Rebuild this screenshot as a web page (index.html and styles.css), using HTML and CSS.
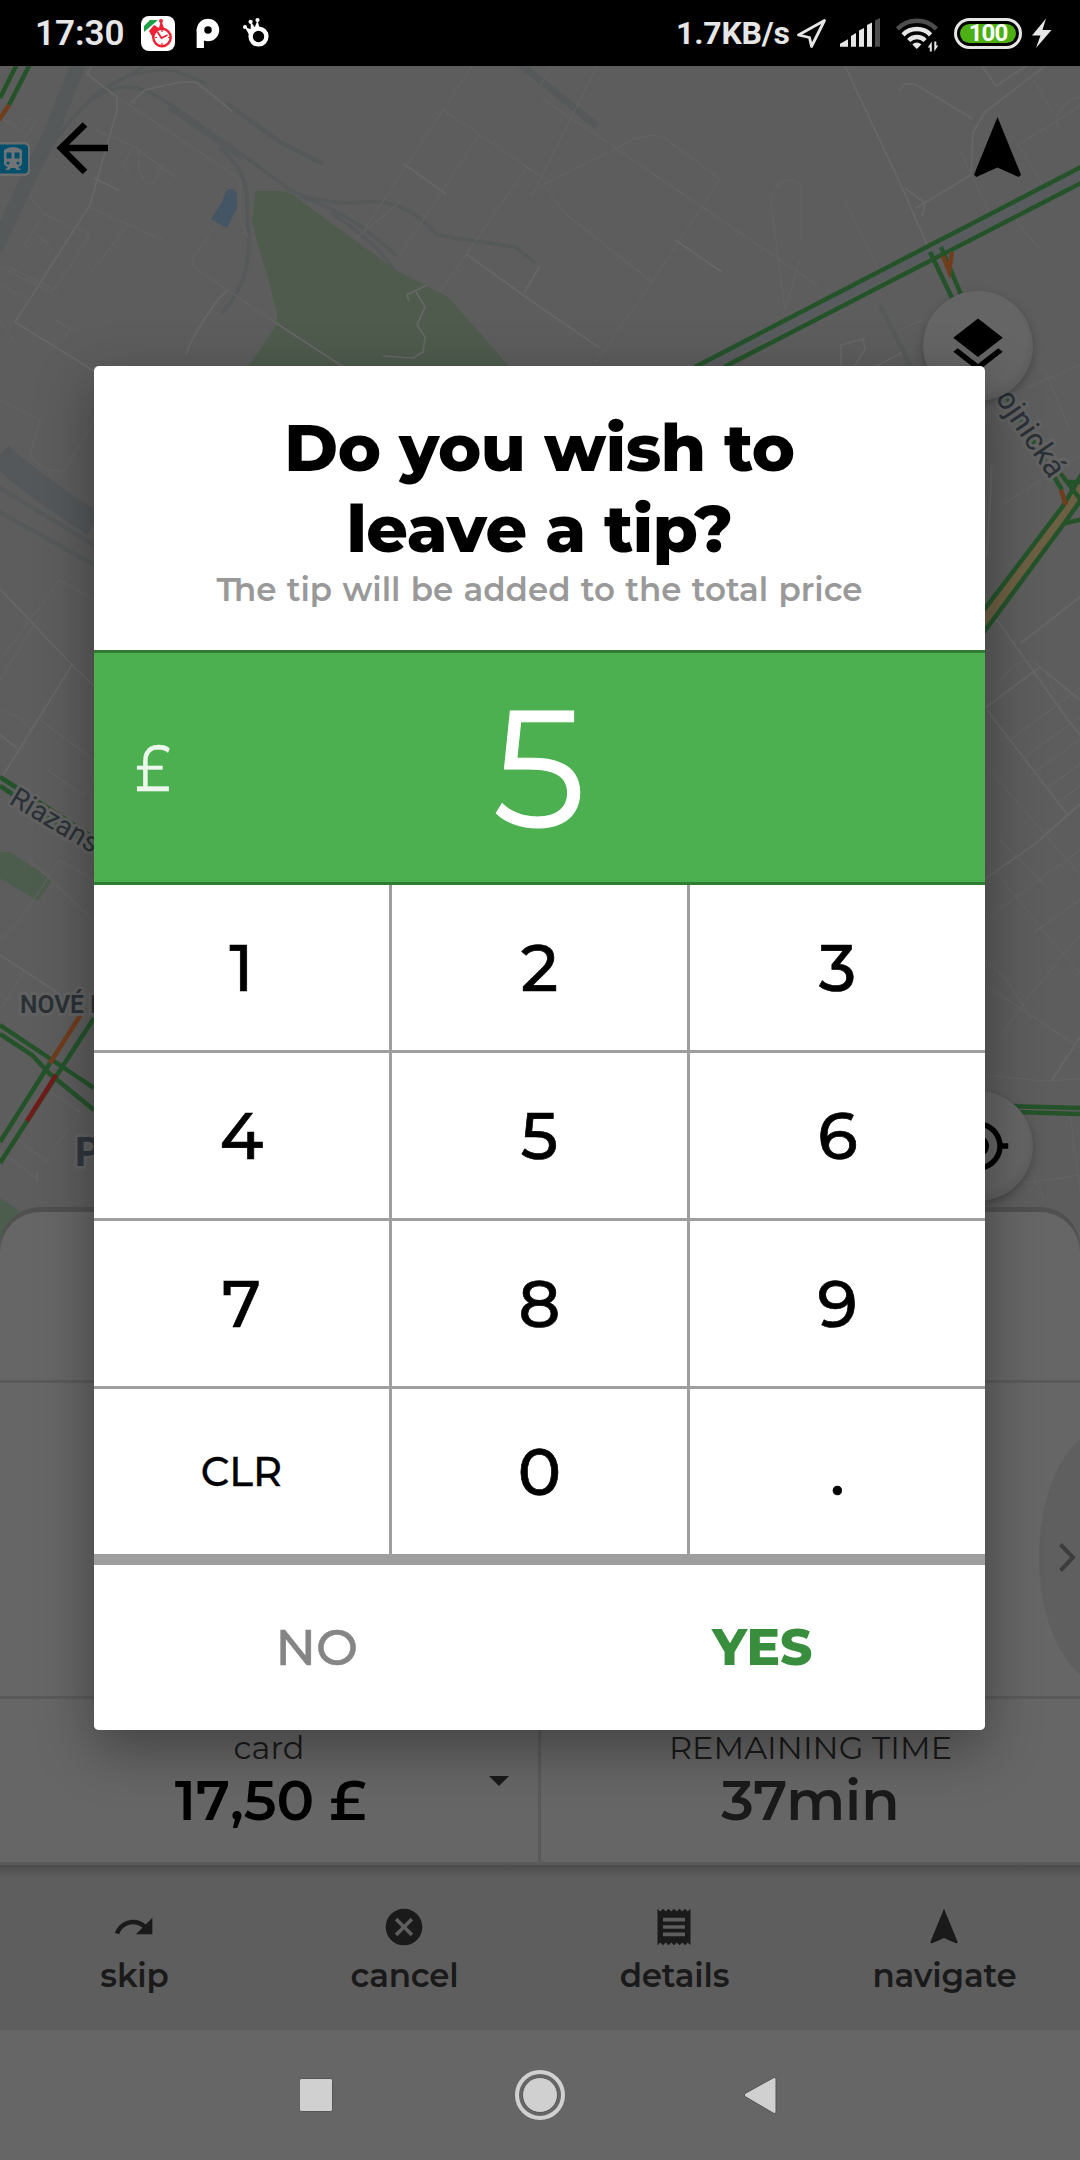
FILE: index.html
```html
<!DOCTYPE html>
<html lang="en">
<head>
<meta charset="utf-8">
<title>Tip</title>
<link rel="stylesheet" href="styles.css">
</head>
<body>
<div class="phone">
  <header class="status">
    <span class="clock">17:30</span>
    <svg class="status-left" width="132" height="66" viewBox="140 0 132 66">
      <rect x="141" y="16" width="34" height="35" rx="8" fill="#fff"/>
      <path d="M144 32L158 20h-8L144 26z" fill="#1ba045"/>
      <path d="M149 31l5-6 5 3 2-8 3 8-1 4-10 6z" fill="#ee2233"/>
      <circle cx="161" cy="21" r="2" fill="#ee2233"/>
      <circle cx="162" cy="37.500" r="8.700" fill="#fff" stroke="#ee2233" stroke-width="2.400"/>
      <path d="M157.500 32l4 6 6-3" fill="none" stroke="#ee2233" stroke-width="1.800"/>
      <path d="M162 30v2M162 43v2M155 37.500h2M168 37.500h2" stroke="#ee2233" stroke-width="1.200"/>
      <circle cx="208" cy="30" r="7.500" fill="none" stroke="#fff" stroke-width="7.500"/>
      <path d="M200.300 29v19" stroke="#fff" stroke-width="7.300"/>
      <circle cx="258.500" cy="36.500" r="7.900" fill="none" stroke="#fff" stroke-width="4.400"/>
      <path d="M244.700 27l8 3-4 4zM250.700 21.500l5 7-5 3zM257.500 20l2 8h-5z" fill="#fff"/>
      <circle cx="245" cy="27" r="2.100" fill="#fff"/><circle cx="250.600" cy="21.800" r="2.100" fill="#fff"/><circle cx="257.500" cy="20" r="2.100" fill="#fff"/>
    </svg>
    <span class="speed">1.7KB/s</span>
    <svg class="status-right" width="150" height="66" viewBox="795 0 150 66">
      <path d="M824.500 20.500L798.500 35l11 2.500 2 9z" fill="none" stroke="#e6e6e6" stroke-width="2.800" stroke-linejoin="round"/>
      <path d="M840 46.700v-3l8-4.500v7.500zM851 46.700V36l5-3v13.700zM859 46.700V30.500l5-2.500v18.700zM867 46.700V25l5-2.500v24.200z" fill="#e6e6e6"/>
      <path d="M875 46.700V20.500l5-2.500v28.700z" fill="#4d4d4d"/>
      <g fill="none" stroke-width="4.500">
        <path d="M897.400 28.800a27.500 27.500 0 0 1 39 0" stroke="#4d4d4d"/>
        <path d="M903 34.800a19.500 19.500 0 0 1 27.600 0" stroke="#e6e6e6"/>
        <path d="M908.700 40.500a11.600 11.600 0 0 1 16.400 0" stroke="#e6e6e6"/>
      </g>
      <path d="M916.800 49l-4.500-4.500a6 6 0 0 1 9 0z" fill="#e6e6e6"/>
      <path d="M931.800 51.500v-10l-4 6h2v4zM934.300 41.500v10l4-6h-2v-4z" fill="#e6e6e6"/>
    </svg>
    <span class="battery"><span class="battery-fill">100</span></span>
    <svg class="bolt" width="22" height="66" viewBox="1031 0 22 66"><path d="M1046 18.500L1032 35.500h8.500L1036 48l15.500-18h-9z" fill="#e6e6e6"/></svg>
  </header>

  <main class="map">
    <svg class="map-canvas" viewBox="0 66 1080 1186" width="1080" height="1186">
      <rect y="66" width="1080" height="1186" fill="#5d5d5d"/>
      <!-- railways -->
      <g fill="none" stroke="#56595a">
        <path d="M80 60L50 135 25 185-5 250" stroke-width="15"/>
        <path d="M40 165Q75 105 105 92T165 101L243 155 290 190Q325 206 365 202T437 235L515 247 535 263" stroke-width="3.500"/>
        <path d="M170 107L243 158" stroke-width="6"/>
        <path d="M88 100Q130 66 175 71L207 84M95 95l50-29" stroke-width="3"/>
        <path d="M226 103L280 142 323 164" stroke-width="4.500"/>
        <path d="M219 147Q247 170 247 200L249 245Q248 285 222 313" stroke-width="4"/>
        <path d="M300 196Q355 215 396 256M330 212Q388 250 400 282" stroke-width="3.500"/>
        <path d="M515 60L597 126" stroke-width="7"/>
        <path d="M880 305Q900 345 915 375" stroke-width="4"/>
        <path d="M0 455Q35 487 94 524" stroke-width="25" stroke="#54585a"/>
        <path d="M0 488L94 545M0 512L94 565" stroke-width="4"/>
      </g>
      <path d="M211 219L222 202 226 191Q233 186 237 194V208L227 228z" fill="#445566"/>
      <path d="M255 191h25l12 3L395 270l32 16 21 11 66 75H245l32-48v-11l-7-28-18-62z" fill="#4e5b4d"/>
      <path d="M-2 852l12 0 42 28-14 21-40-24zM-2 1197l16 10 5 4-21 30z" fill="#4c5d4e"/>
      <!-- streets -->
      <g fill="none" stroke="#676767" stroke-width="1.700">
        <path d="M92 66l-5 8 30 23v13L90 205 15 322 94 371M131 103l14-13 35-8h16l36 29"/>
        <path d="M94 178l24 12M186 354Q195 330 220 297l8-7M404 164l42 30M466 254l74 53M524 293l16-27M540 307l60 41M675 240l47 32"/>
        <path d="M427 285l-20 10 2 6M416 292l9 15-8 18 8 12-2 15-10 6-30-2M276 323L345 368"/>
        <path d="M845 66l60 128 25 58M1045 66L985 112l-12 20-2 43-55 33M899 91l6-7h10l58 35M905 188l20 15-3 14M982 66l14 20 30-20M841 367v-22l22-6 2 10-11 18M874 367l28-14"/>
        <path d="M0 589L72 665 94 686M72 665L0 780M0 735l17 13M0 955L58 993M37 1182v-10"/>
        <path d="M985 708L1040 667 1080 700M997 620L1068 720 1080 735M985 879l50-35 45-40M985 608l12 14M1021 643l59-46M992 465l-5 92M987 710l80 104M1052 1080l28-43M985 1190"/>
      </g>
      <g fill="none" stroke="#636363" stroke-width="1.100">
        <path d="M117 97l123 82v40l8 18M94 129l39 17 45 33M133 146l-10 20 8 6M139 151v20l7 13M163 164l-9 18-9 2M30 195l14 19-22 35M88 207l75 33M125 228L101 260l-18 20M44 214l45 20-18 32-20 26-50-25M9 267l50 25M0 285l27 14M215 227l-23 33v6l84 57M37 236q10 5 15 12l-5 9M0 117l22 14 6-13 8 3-15 25"/>
        <path d="M472 66L364 230M355 239l45-37M442 109l85 58 13 9M479 135l-79 120M553 66l-13 20M527 167L440 292M597 66l-65 130M540 97l280 190M540 186l76-37q30-20 50-10l54 40-68 103-63 90M545 187l22 28 85 67M800 260l-15 50-14-105q0-22 18-25 12 0 12 10v52M845 200l38 80M1060 130q-10-12 10-30 25-8 20 0l-72 45 35 55 27-20M960 150l30 65M900 330l80-35M1034 80l20 35M1000 200l40 50"/>
        <path d="M0 322l15 20M55 320l15 9-5 10M0 400l40 20-10 35q15 20 35 15L94 420M0 660l60-80 34 20M0 680l37-60M40 720l54 40M94 880L60 860 20 920 0 940M25 970L0 1010M48 1090l32 22-35 50M25 1145l23 17M0 1150l38 30M0 995l10 7M30 860l64 61M0 710l20 8 10 12-8 20M48 770l35 25 11-15"/>
        <path d="M985 920l95-70M985 858l60 75 35 40M985 985l50 33 45 30M985 1075l60 6 35-2M1033 933l47-33M985 765l95 110M1010 740l70-52M1020 760l60-43M1030 776l50-37M1042 792l38-28M1053 806l27-20M995 690q20-35 40-28l12 12 8 20M1000 840l45 45M1015 1130l10 30 20 40M1070 1115l10 75M1025 1183l55-8M1000 1037l30-42 50-60M1002 505l78-50M1010 395l70-30M1045 370l25 60M985 960l22 20 25 40"/>
      </g>
      <!-- traffic layer -->
      <path d="M705 367L1080 175" stroke="#595c5f" stroke-width="9"/>
      <path d="M983 621L1066 508 1082 484" fill="none" stroke="#6c5f43" stroke-width="11"/>
      <g fill="none" stroke="#24532a" stroke-width="4.500">
        <path d="M18 62L0 98M31 62L9 105M695 367L1083 166M724 367L1083 182M930 252l23 48M941 247l21 50"/>
        <path d="M1000 385L1062 490M1058 470L1083 503M984 610L1063 506 1083 472M984 632L1066 521 1083 497M1066 482h17M1066 523l17-4"/>
        <path d="M0 777L94 838M0 786L90 845"/>
        <path d="M0 1025L94 1088M0 1034l32 21 18 19 44 36M0 1163L94 1018M0 1142L50 1063"/>
        <path d="M1010 1106l73 2M1014 1112l69 2"/>
      </g>
      <path d="M9 105L-1 120M50 1063L85 1008M943 256l6 15 3-19M1061 490l5 15" fill="none" stroke="#703d1d" stroke-width="4.500"/>
      <path d="M27 1121L56 1075" stroke="#6f1c1a" stroke-width="4.500"/>
      <rect x="-5" y="142" width="35" height="34" rx="5" fill="#6c6c6c"/>
      <rect x="-5" y="144.500" width="33" height="29" rx="4" fill="#00506b"/>
      <path d="M4 150q9-6 18 0v13q0 3-4 4l3 3h-4l-2-2h-4l-2 2H5l3-3q-4-1-4-4z" fill="#707477"/>
      <path d="M6.500 152.500h5v6h-5zM14.500 152.500h5v6h-5z" fill="#00506b"/><circle cx="8" cy="163" r="1.600" fill="#00506b"/><circle cx="18" cy="163" r="1.600" fill="#00506b"/>
      <g class="map-label">
        <text transform="translate(8 803) rotate(31)" font-size="28">Riazanská</text>
        <text transform="translate(984 382) rotate(56)" font-size="31">Bojnická</text>
        <text x="20" y="1013" font-size="26.500" font-weight="600" textLength="64" lengthAdjust="spacingAndGlyphs">NOVÉ</text>
        <text x="90" y="1013" font-size="26.500" font-weight="600">MESTO</text>
        <text x="75" y="1166" font-size="40" font-weight="700" class="district">POI</text>
      </g>
    </svg>
    <svg class="back" viewBox="0 0 54 54"><path d="M53 27H6M30 3.500L6 27l24 24" fill="none" stroke="#000" stroke-width="6.500"/></svg>
    <svg class="north" viewBox="4.500 2 15 19" preserveAspectRatio="none"><path d="M12 2L4.500 20.290l.71.710L12 18l6.790 3 .710-.710z"/></svg>
    <div class="fab fab-layers"><svg viewBox="0 0 24 24"><path d="M11.990 18.540l-7.370-5.730L3 14.070l9 7 9-7-1.630-1.270-7.380 5.740zM12 16l7.360-5.730L21 9l-9-7-9 7 1.630 1.270L12 16z"/></svg></div>
    <div class="fab fab-locate"><svg viewBox="0 0 24 24"><path d="M12 8c-2.210 0-4 1.790-4 4s1.790 4 4 4 4-1.790 4-4-1.790-4-4-4zm8.940 3c-.460-4.170-3.770-7.480-7.940-7.940V1h-2v2.060C6.830 3.520 3.520 6.830 3.060 11H1v2h2.060c.460 4.170 3.770 7.480 7.940 7.940V23h2v-2.060c4.170-.460 7.480-3.770 7.940-7.940H23v-2h-2.060zM12 19c-3.870 0-7-3.130-7-7s3.130-7 7-7 7 3.130 7 7-3.130 7-7 7z"/></svg></div>
  </main>

  <section class="sheet">
    <div class="sheet-head"></div>
    <div class="sheet-body">
      <svg class="handle" viewBox="0 0 41 234"><ellipse cx="70" cy="117" rx="70" ry="129" fill="#5f5f5f"/><path d="M21.500 104.500L34 117.500 21.500 130.500" fill="none" stroke="#3d3d3d" stroke-width="4"/></svg>
    </div>
    <div class="summary">
      <div class="stat">
        <span class="stat-label">card</span>
        <span class="stat-value val-price">17,50 £</span>
        <svg class="caret" viewBox="0 0 20 10"><path d="M0 0h20L10 10z"/></svg>
      </div>
      <div class="stat stat-time">
        <span class="stat-label">REMAINING TIME</span>
        <span class="stat-value">37min</span>
      </div>
    </div>
  </section>

  <nav class="actions">
    <div class="action"><svg viewBox="0 0 24 24"><path d="M18.400 10.600C16.550 8.990 14.150 8 11.500 8c-4.650 0-8.580 3.030-9.960 7.220L3.900 16c1.050-3.190 4.050-5.500 7.600-5.500 1.950 0 3.730.720 5.120 1.880L13 16h9V7l-3.600 3.600z"/></svg><span>skip</span></div>
    <div class="action"><svg viewBox="0 0 24 24"><path d="M12 2C6.470 2 2 6.470 2 12s4.470 10 10 10 10-4.470 10-10S17.530 2 12 2zm5 13.590L15.590 17 12 13.410 8.410 17 7 15.590 10.590 12 7 8.410 8.410 7 12 10.590 15.590 7 17 8.410 13.410 12 17 15.590z"/></svg><span>cancel</span></div>
    <div class="action"><svg viewBox="0 0 24 24"><path d="M18 17H6v-2h12v2zm0-4H6v-2h12v2zm0-4H6V7h12v2zM3 22l1.500-1.500L6 22l1.500-1.500L9 22l1.500-1.500L12 22l1.500-1.500L15 22l1.500-1.500L18 22l1.500-1.500L21 22V2l-1.500 1.500L18 2l-1.500 1.500L15 2l-1.500 1.500L12 2l-1.500 1.500L9 2 7.500 3.500 6 2 4.500 3.500 3 2v20z"/></svg><span>details</span></div>
    <div class="action"><svg viewBox="0 0 24 24"><path d="M12 2L4.500 20.290l.71.710L12 18l6.790 3 .710-.710z"/></svg><span>navigate</span></div>
  </nav>

  <footer class="system-nav">
    <svg width="480" height="54" viewBox="300 2068 480 54">
      <g fill="#d0d0d0" stroke="#555" stroke-width="1">
        <rect x="299.500" y="2078.500" width="33" height="33" rx="2"/>
        <circle cx="540" cy="2095" r="17.500"/>
        <path d="M745 2093.500L774 2077.500q2-.500 2 1.500v33q0 2-2 1.500L745 2096.500q-1.500-1.500 0-3z"/>
      </g>
      <circle cx="540" cy="2095" r="23" fill="none" stroke="#d0d0d0" stroke-width="4"/>
    </svg>
  </footer>

  <div class="dialog">
    <div class="dialog-head">
      <h1><span>Do you wish to</span><span>leave a tip?</span></h1>
      <p>The tip will be added to the total price</p>
    </div>
    <div class="amount"><span class="currency">£</span><span class="value">5</span></div>
    <div class="keypad">
      <button>1</button><button>2</button><button>3</button>
      <button>4</button><button>5</button><button>6</button>
      <button>7</button><button>8</button><button>9</button>
      <button class="clear">CLR</button><button>0</button><button>.</button>
    </div>
    <div class="dialog-actions"><button class="no">NO</button><button class="yes">YES</button></div>
  </div>
</div>
</body>
</html>
```
FILE: styles.css
```css
* { box-sizing: border-box; }
body { margin: 0; background: #666; font-family: Montserrat, Inter, "Open Sans", sans-serif; }
button { border: 0; margin: 0; padding: 0; background: #fff; font: inherit; color: inherit; }
.phone { position: relative; width: 1080px; height: 2160px; overflow: hidden; display: flex; flex-direction: column; background: #666; }

.status { height: 66px; flex: none; display: flex; align-items: center; background: #000; color: #e6e6e6; font-family: Roboto, sans-serif; font-weight: 600; position: relative; z-index: 2; }
.clock { width: 105px; margin-left: 35px; font-size: 35px; line-height: 66px; padding-top: 1px; }
.status-left { flex: none; }
.speed { margin-left: 404px; width: 119px; font-size: 32px; font-weight: 700; line-height: 66px; white-space: nowrap; letter-spacing: -.2px; }
.status-right { flex: none; }
.battery { margin-left: 9px; width: 68px; height: 31px; border: 3px solid #e6e6e6; border-radius: 16px; padding: 3px; }
.battery-fill { display: block; height: 19px; border-radius: 10px; background: #4caf14; color: #fff; font-size: 24px; font-weight: 700; line-height: 19px; text-align: center; letter-spacing: -1px; }
.bolt { margin-left: 9px; flex: none; }

.map { position: relative; height: 1186px; margin-bottom: -40px; flex: none; background: #5d5d5d; }
.map-canvas { display: block; }
.map-label { font-family: Roboto, sans-serif; fill: #2a3136; stroke: #626262; stroke-width: 6px; paint-order: stroke; stroke-linejoin: round; }
.district { fill: #30363f; letter-spacing: 3px; }
.back { position: absolute; left: 55px; top: 55px; width: 54px; height: 54px; }
.north { position: absolute; left: 974px; top: 51px; width: 47px; height: 60px; }
.fab { position: absolute; left: 923px; width: 110px; height: 110px; border-radius: 50%; background: #656565; display: flex; align-items: center; justify-content: center; box-shadow: 0 3px 8px rgba(0,0,0,.25), inset -3px -6px 5px rgba(0,0,0,.06); }
.fab svg { width: 66px; height: 66px; }
.fab-layers { top: 225px; }
.fab-locate { top: 1025px; }

.sheet { position: relative; flex: none; height: 653px; background: #666; border-radius: 40px 40px 0 0; box-shadow: 0 -5px 0 #505050; display: flex; flex-direction: column; border-bottom: 3px solid #5a5a5a; }
.sheet-head { height: 171px; border-bottom: 3px solid #5a5a5a; }
.sheet-body { height: 316px; border-bottom: 3px solid #5a5a5a; display: flex; justify-content: flex-end; align-items: center; }
.handle { width: 41px; height: 234px; margin-top: 35px; }
.summary { flex: 1; display: flex; color: #1a1a1a; }
.stat { position: relative; width: 538px; display: flex; flex-direction: column; align-items: center; padding-top: 29px; }
.stat-time { width: 542px; border-left: 3px solid #5a5a5a; }
.stat-label { font-size: 32px; font-weight: 400; line-height: 40px; letter-spacing: .05px; }
.stat-value { font-size: 56px; font-weight: 600; line-height: 64px; white-space: pre; }
.val-price { color: #000; font-kerning: none; padding-left: 3px; }
.caret { position: absolute; left: 489px; top: 77px; width: 20px; height: 10px; fill: #1a1a1a; }

.actions { height: 165px; flex: none; display: grid; grid-template-columns: repeat(4, 270px); margin-left: -1px; width: 1081px; background: linear-gradient(#4b4b4b, #5e5e5e 12px); color: #1a1a1a; }
.action { display: flex; flex-direction: column; align-items: center; padding-top: 40px; font-size: 32.500px; font-weight: 600; line-height: 40px; letter-spacing: -.2px; }
.action svg { width: 44px; height: 44px; fill: #1a1a1a; }
.action span { margin-top: 7px; padding-left: 1px; }

.system-nav { flex: 1; display: flex; justify-content: center; align-items: center; }

.dialog { position: absolute; left: 94px; top: 366px; width: 891px; height: 1364px; border-radius: 5px; overflow: hidden; background: #fff; color: #000; box-shadow: 0 18px 55px rgba(0,0,0,.36); z-index: 3; }
.dialog-head { height: 284px; padding-top: 41px; text-align: center; }
h1 { margin: 0; font-size: 65px; font-weight: 800; line-height: 81px; letter-spacing: -.4px; }
h1 span { display: block; }
.dialog-head p { margin: 1px 0 0; color: #999; font-size: 32.500px; font-weight: 600; line-height: 40px; word-spacing: 1.300px; font-variant-ligatures: discretionary-ligatures; }
.amount { height: 235px; background: #4caf50; border: solid #2e7d32; border-width: 3px 0; color: #fff; display: grid; grid-template-columns: 118px 1fr 118px; align-items: center; text-align: center; }
.currency { font-size: 65px; font-weight: 400; color: #edf7ee; transform: scaleX(.84); -webkit-text-stroke: .5px #edf7ee; }
.value { font-size: 165px; font-weight: 400; line-height: 227px; padding-bottom: 1px; -webkit-text-stroke: 1px #fff; }
.keypad { display: grid; grid-template-columns: repeat(3, 295px); grid-auto-rows: 165px; gap: 3px; background: #9e9e9e; border-bottom: 11px solid #9e9e9e; }
.keypad button { font-size: 65px; font-weight: 500; line-height: 165px; -webkit-text-stroke: .7px #000; }
.keypad .clear { font-size: 40px; -webkit-text-stroke-width: .3px; }
.dialog-actions { height: 165px; display: grid; grid-template-columns: 1fr 1fr; font-size: 50px; }
.no { color: #858585; font-weight: 500; -webkit-text-stroke: .5px #858585; }
.yes { color: #388e3c; font-weight: 800; }
```
